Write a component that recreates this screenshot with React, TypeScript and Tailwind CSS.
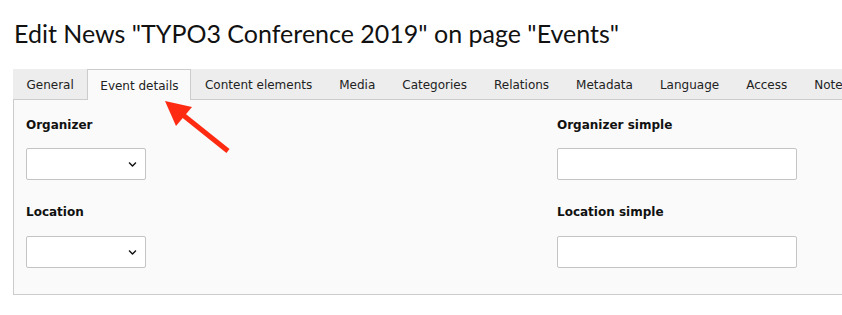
import { FaChevronDown } from "react-icons/fa";

const tabs = [
  "General",
  "Event details",
  "Content elements",
  "Media",
  "Categories",
  "Relations",
  "Metadata",
  "Language",
  "Access",
  "Notes",
];

const Select = () => (
  <div className="flex items-center justify-end w-[120px] h-[32px] bg-white border border-[#c4c4c4] rounded-[2px] pr-[8px]">
    <FaChevronDown className="text-[9px] text-[#111]" />
  </div>
);

const Input = () => (
  <div className="w-[240px] h-[32px] bg-white border border-[#c4c4c4] rounded-[2px]" />
);

const Label = ({ children }: { children: string }) => (
  <div className="font-bold text-[12px] text-[#111] leading-[16px] h-[16px]">{children}</div>
);

export default function App() {
  return (
    <div className="relative w-[842px] h-[315px] overflow-hidden bg-white font-['DejaVu_Sans',sans-serif]">
      <h1 className="pt-[17px] pl-[14px] text-[25px] leading-[32px] text-[#111] font-['Lato',sans-serif] whitespace-nowrap">
        Edit News "TYPO3 Conference 2019" on page "Events"
      </h1>

      <div className="ml-[13px] mt-[20px] w-[900px]">
        <div className="flex h-[31px] bg-[#ededed] border-b border-[#cccccc] text-[12px] text-[#222]">
          {tabs.map((t) =>
            t === "Event details" ? (
              <div
                key={t}
                className="h-[31px] pl-[12px] pr-[12px] pt-[2px] flex items-center bg-[#fafafa] border border-b-0 border-[#cccccc] whitespace-nowrap"
              >
                {t}
              </div>
            ) : (
              <div key={t} className="h-[30px] px-[13.5px] pt-[2px] flex items-center whitespace-nowrap">
                {t}
              </div>
            )
          )}
        </div>

        <div className="h-[195px] bg-[#fafafa] border border-t-0 border-[#cccccc] pl-[12px] pt-[17px]">
          <div className="flex">
            <div className="w-[531px] flex flex-col">
              <Label>Organizer</Label>
              <div className="mt-[15px]"><Select /></div>
              <div className="mt-[24px]"><Label>Location</Label></div>
              <div className="mt-[16px]"><Select /></div>
            </div>
            <div className="flex flex-col">
              <Label>Organizer simple</Label>
              <div className="mt-[15px]"><Input /></div>
              <div className="mt-[24px]"><Label>Location simple</Label></div>
              <div className="mt-[16px]"><Input /></div>
            </div>
          </div>
        </div>
      </div>

      <svg className="absolute left-0 top-0" width="842" height="315" viewBox="0 0 842 315">
        <line x1="228" y1="151" x2="178" y2="111" stroke="#fe2a12" strokeWidth="5" />
        <polygon points="165,101 192,107 176,126" fill="#fe2a12" />
      </svg>
    </div>
  );
}
